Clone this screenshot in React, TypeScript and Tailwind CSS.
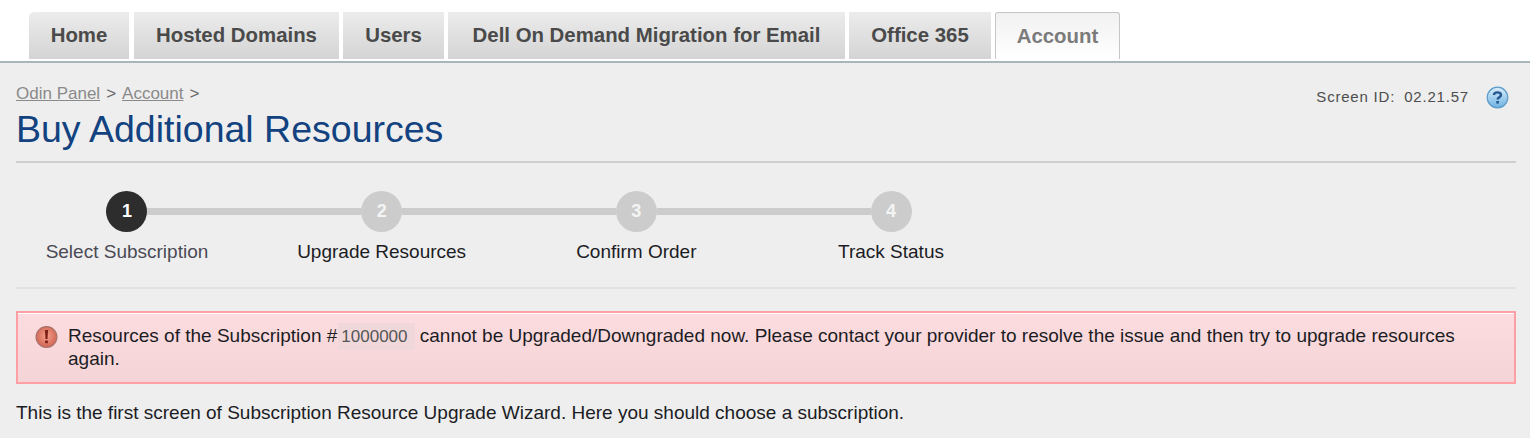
const tabs = [
  { label: "Home", width: "w-[100px] mr-[1px]", rounded: "rounded-tl-[5px]" },
  { label: "Hosted Domains", width: "w-[205px]", rounded: "" },
  { label: "Users", width: "w-[101px]", rounded: "" },
  { label: "Dell On Demand Migration for Email", width: "w-[397px]", rounded: "" },
  { label: "Office 365", width: "w-[142px]", rounded: "" },
]

const steps = [
  { n: 1, label: "Select Subscription" },
  { n: 2, label: "Upgrade Resources" },
  { n: 3, label: "Confirm Order" },
  { n: 4, label: "Track Status" },
]

function HelpIcon() {
  return (
    <svg width="23" height="23" viewBox="0 0 23 23">
      <defs>
        <linearGradient id="helpFill" x1="0" y1="0" x2="0" y2="1">
          <stop offset="0" stopColor="#d8ecf9" />
          <stop offset="1" stopColor="#6fb3e3" />
        </linearGradient>
      </defs>
      <circle cx="11.5" cy="11.5" r="10.3" fill="url(#helpFill)" stroke="#5d9ccb" strokeWidth="1.2" />
      <path d="M8 9 C8 5.6 15 5.4 15 9 C15 11.4 11.6 11.2 11.6 13.6" fill="none" stroke="#24578f" strokeWidth="2.4" />
      <rect x="10.3" y="15" width="2.6" height="2.6" fill="#24578f" />
    </svg>
  )
}

function ErrorIcon() {
  return (
    <svg width="23" height="24" viewBox="0 0 23 24">
      <defs>
        <radialGradient id="errorFill" cx="0.5" cy="0.45" r="0.6">
          <stop offset="0" stopColor="#f2a08c" />
          <stop offset="1" stopColor="#cf5f4e" />
        </radialGradient>
      </defs>
      <circle cx="11.5" cy="12" r="10.4" fill="url(#errorFill)" stroke="#a9716a" strokeWidth="1.2" />
      <path d="M9.9 5 H13.1 L12.5 14 H10.5 Z" fill="#7c1f17" />
      <rect x="10.1" y="15.5" width="2.8" height="2.8" rx="0.6" fill="#7c1f17" />
    </svg>
  )
}

export default function App() {
  return (
    <div className="h-[438px] w-[1530px] overflow-hidden bg-[#eeeeee] font-['Liberation_Sans',Arial,sans-serif] text-[19px] text-[#1c1c24]">
      <div className="h-[63px] border-b-2 border-[#a9b5bd] bg-white pl-[29px] pt-[12px]">
        <div className="flex gap-[4px]">
          {tabs.map(tab => (
            <div
              key={tab.label}
              className={`flex h-[47px] items-center justify-center bg-gradient-to-b from-[#ececec] to-[#d4d4d4] text-[20.4px] font-bold text-[#4a4a4a] ${tab.width} ${tab.rounded}`}
            >
              {tab.label}
            </div>
          ))}
          <div className="flex h-[47px] w-[125px] items-center justify-center rounded-t-[3px] border border-b-0 border-[#c6c6c6] bg-gradient-to-b from-[#f1f1f1] to-white text-[20.4px] font-bold text-[#7b7b7b]">
            Account
          </div>
        </div>
      </div>

      <div className="pl-4 pr-[14px]">
        <div className="flex h-[100px] justify-between border-b-2 border-[#cfcfcf]">
          <div>
            <div className="mt-[21px] flex h-[20px] items-center gap-[6px] text-[17px] text-[#8a8a8a]">
              <span className="underline">Odin Panel</span>
              <span className="text-[#666666]">&gt;</span>
              <span className="underline">Account</span>
              <span className="text-[#666666]">&gt;</span>
            </div>
            <h1 className="mt-[3px] text-[37.5px] leading-[44px] text-[#12427f]">Buy Additional Resources</h1>
          </div>
          <div className="mr-[7px] mt-[23px] flex h-[23px] items-center text-[15px] tracking-[0.8px] text-[#4d4d4d]">
            <span>Screen ID:</span>
            <span className="ml-[9px]">02.21.57</span>
            <span className="ml-[17px]">
              <HelpIcon />
            </span>
          </div>
        </div>

        <div className="-ml-[16.4px] flex h-[124px] pt-[28px]">
          {steps.map((step, i) => (
            <div key={step.n} className="flex w-[254.7px] flex-col items-center">
              <div className="flex w-full items-center">
                <div className={`h-[7px] flex-1 ${i === 0 ? "bg-transparent" : "bg-[#cccccc]"}`} />
                <div
                  className={`flex size-[41px] items-center justify-center rounded-full text-[18px] font-bold ${i === 0 ? "bg-[#2d2d2d] text-white" : "bg-[#cccccc] text-[#f4f4f4]"}`}
                >
                  {step.n}
                </div>
                <div className={`h-[7px] flex-1 ${i === 3 ? "bg-transparent" : "bg-[#cccccc]"}`} />
              </div>
              <div className={`mt-[9px] leading-[22px] ${i === 0 ? "text-[#4a4a55]" : "text-[#1c1c24]"}`}>{step.label}</div>
            </div>
          ))}
        </div>

        <div className="h-[2px] bg-[#e2e2e2]" />

        <div className="mt-[22px] flex h-[73px] gap-[10px] border-2 border-[#ff9ea3] bg-gradient-to-b from-[#fddcdf] to-[#f4d4d6] pl-[17px] pr-[30px] pt-[12px] shadow-[inset_0_1px_0_#ffffff]">
          <div className="shrink-0">
            <ErrorIcon />
          </div>
          <p className="leading-[22px]">
            Resources of the Subscription #
            <span className="ml-[1px] bg-[#f0d8da] py-[4px] pl-[3px] pr-[7px] text-[17px] text-[#555555]">1000000</span>
            {" "}cannot be Upgraded/Downgraded now. Please contact your provider to resolve the issue and then try to upgrade resources again.
          </p>
        </div>

        <p className="mt-[18px] leading-[22px]">
          This is the first screen of Subscription Resource Upgrade Wizard. Here you should choose a subscription.
        </p>
      </div>
    </div>
  )
}
